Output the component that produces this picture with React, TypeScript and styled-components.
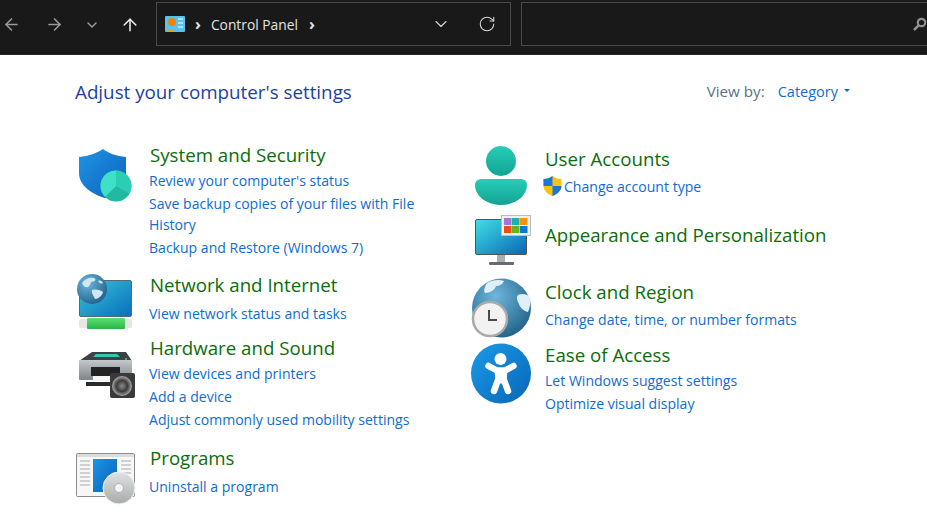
import React from 'react';
import styled, {createGlobalStyle} from 'styled-components';
import {ArrowLeft, ArrowRight, ArrowUp, ChevronDown, RotateCw} from 'lucide-react';

const GlobalStyle = createGlobalStyle`
    html, body {
        margin: 0;
        padding: 0;
        background: #fff;
        overflow: hidden;
    }
    body {
        font-family: "Open Sans", "Noto Sans", sans-serif;
    }
`;

const Page = styled.div`
    width: 927px;
    height: 523px;
    overflow: hidden;
`;

const Toolbar = styled.div`
    height: 55px;
    background: #191919;
    border-bottom: 1px solid #262626;
    box-sizing: border-box;
    display: flex;
    align-items: flex-start;
`;

const NavGroup = styled.div`
    width: 156px;
    height: 45px;
    margin-top: 2px;
    padding-left: 2px;
    box-sizing: border-box;
    display: flex;
    align-items: center;
    gap: 23px;
    flex: none;
`;

const NavIcon = styled.span<{$color: string; $after: number}>`
    display: flex;
    color: ${p => p.$color};
    margin-left: ${p => p.$after}px;
`;

const AddressBox = styled.div`
    width: 355px;
    height: 44px;
    margin-top: 2px;
    border: 1px solid #4a4a4a;
    box-sizing: border-box;
    display: flex;
    align-items: center;
    padding: 0 14px 0 8px;
    color: #e4e4e4;
    font-size: 13.8px;
    flex: none;
`;

const Crumb = styled.span`
    margin: 0 10px 0 10px;
    font-size: 16px;
    font-weight: 700;
    line-height: 1;
`;

const Arrow = styled.span`
    margin-left: 11px;
    font-weight: 700;
    font-size: 16px;
    line-height: 1;
`;

const AddressTools = styled.div`
    margin-left: auto;
    display: flex;
    align-items: center;
    gap: 27px;
    color: #d8d8d8;
`;

const SearchBox = styled.div`
    flex: 1;
    height: 44px;
    margin: 2px 0 0 10px;
    border: 1px solid #4a4a4a;
    border-right: none;
    box-sizing: border-box;
    display: flex;
    align-items: center;
    justify-content: flex-end;
`;

const Content = styled.main`
    padding: 23px 77px 0 75px;
`;

const Header = styled.div`
    display: flex;
    justify-content: space-between;
    align-items: center;
    height: 28px;
`;

const Heading = styled.h1`
    margin: 0;
    font-size: 18.8px;
    font-weight: 400;
    color: #1c3fa8;
`;

const ViewBy = styled.div`
    display: flex;
    align-items: center;
    margin-bottom: 2px;
    font-size: 15.2px;
    color: #5c7088;
`;

const ViewLink = styled.span`
    margin-left: 13px;
    font-size: 14.5px;
    color: #0f6cd4;
`;

const Caret = styled.span`
    margin-left: 6px;
    margin-bottom: 2px;
    width: 0;
    height: 0;
    border: 3px solid transparent;
    border-top: 3px solid #0f6cd4;
    border-bottom: none;
`;

const Columns = styled.div`
    display: grid;
    grid-template-columns: 396px 1fr;
`;

const Column = styled.div<{$top: number}>`
    padding-top: ${p => p.$top}px;
`;

const Category = styled.section<{$gap: number}>`
    display: grid;
    grid-template-columns: 74px 1fr;
    margin-bottom: ${p => p.$gap}px;
`;

const IconSlot = styled.svg`
    width: 75px;
    height: 70px;
    margin-bottom: -70px;
    overflow: visible;
    display: block;
`;

const CategoryTitle = styled.h2`
    margin: 0;
    font-size: 18.7px;
    line-height: 26px;
    font-weight: 400;
    color: #0b6d0b;
`;

const LeftTitle = styled(CategoryTitle)`
    margin-left: 1px;
`;

const Links = styled.div<{$top: number}>`
    margin-top: ${p => p.$top}px;
    max-width: 275px;
    display: flex;
    flex-direction: column;
    gap: 2px;
`;

const TaskLink = styled.a`
    font-size: 14.05px;
    line-height: 21px;
    color: #0f6cd4;
`;

const ShieldLink = styled(TaskLink)`
    display: flex;
    align-items: center;
    gap: 2px;
    margin-left: -2px;
    white-space: nowrap;
`;

function SecurityIcon() {
    return (
        <IconSlot viewBox="75 142 75 70">
            <defs>
                <linearGradient id="shieldBlue" x1="0" y1="0" x2="1" y2="1">
                    <stop offset="0" stopColor="#1f94e6" />
                    <stop offset="1" stopColor="#0a62b8" />
                </linearGradient>
            </defs>
            <path d="M103 149c5 4 13 7 23 8v17c0 11-9 19-21 24-14-4-26-13-26-25v-16c10-1 18-4 24-8z" fill="url(#shieldBlue)" />
            <circle cx="116" cy="186" r="15.500" fill="#22b9a3" />
            <path d="M116 186v-15.500a15.500 15.500 0 0 1 13.500 23z" fill="#2dcdb4" />
            <path d="M116 186v-15.500a15.500 15.500 0 0 0-11 26.500z" fill="#3fe0ca" />
        </IconSlot>
    );
}

function NetworkIcon() {
    return (
        <IconSlot viewBox="75 272 75 70">
            <defs>
                <linearGradient id="netScreen" x1="0" y1="0" x2="1" y2="1">
                    <stop offset="0" stopColor="#38c5d6" />
                    <stop offset="1" stopColor="#0a6ebd" />
                </linearGradient>
                <radialGradient id="netGlobe" cx="0.35" cy="0.3" r="0.8">
                    <stop offset="0" stopColor="#6fb7e0" />
                    <stop offset="1" stopColor="#1d5c85" />
                </radialGradient>
                <linearGradient id="netBar" x1="0" y1="0" x2="0" y2="1">
                    <stop offset="0" stopColor="#58e070" />
                    <stop offset="1" stopColor="#2cb44a" />
                </linearGradient>
            </defs>
            <rect x="79.500" y="280.500" width="52" height="36" rx="1.500" fill="url(#netScreen)" stroke="#5b6770" />
            <rect x="79" y="319" width="53" height="9" rx="2" fill="#e6e6e6" />
            <rect x="87" y="318" width="38" height="11" rx="1" fill="url(#netBar)" />
            <circle cx="92" cy="289" r="15" fill="url(#netGlobe)" />
            <path d="M82 283c3-4 7-6 12-5 3 1 1 4-3 4-1 3-2 6-5 5-2 0-3-2-4-4zM92 290c4-1 9 0 11 2-1 4-5 7-8 7-1-3-4-6-3-9zM98 281c2-1 4 0 5 2-1 1-3 1-5-2z" fill="#cfe6f3" />
        </IconSlot>
    );
}

function HardwareIcon() {
    return (
        <IconSlot viewBox="75 335 75 70">
            <defs>
                <linearGradient id="printBody" x1="0" y1="0" x2="0" y2="1">
                    <stop offset="0" stopColor="#c4c8cb" />
                    <stop offset="1" stopColor="#7e8488" />
                </linearGradient>
                <radialGradient id="speakerCone">
                    <stop offset="0" stopColor="#8c8c8c" />
                    <stop offset="0.55" stopColor="#3b3b3b" />
                    <stop offset="1" stopColor="#a8a8a8" />
                </radialGradient>
            </defs>
            <path d="M92 352h34l6 9H79z" fill="#3c4347" />
            <path d="M96 354h21l3 3H93z" fill="#35c8b4" />
            <rect x="79" y="360" width="53" height="20" rx="1" fill="url(#printBody)" />
            <rect x="91" y="367" width="29" height="9" fill="#222" />
            <rect x="93" y="376" width="22" height="5" fill="#f4f4f4" />
            <rect x="86" y="382" width="26" height="4" fill="#2c2c2c" />
            <circle cx="126" cy="359" r="1" fill="#4be04b" />
            <rect x="110" y="373" width="25" height="25" rx="2" fill="#3a3a3a" />
            <circle cx="122" cy="386" r="10" fill="url(#speakerCone)" />
        </IconSlot>
    );
}

function ProgramsIcon() {
    return (
        <IconSlot viewBox="75 445 75 70">
            <defs>
                <linearGradient id="progBlue" x1="0" y1="0" x2="1" y2="1">
                    <stop offset="0" stopColor="#1c95e6" />
                    <stop offset="1" stopColor="#0a5fb4" />
                </linearGradient>
                <linearGradient id="discFill" x1="0" y1="0" x2="0" y2="1">
                    <stop offset="0" stopColor="#dfe3e3" />
                    <stop offset="1" stopColor="#a9abab" />
                </linearGradient>
            </defs>
            <rect x="76.500" y="453.500" width="58" height="43" rx="1" fill="#f7f7f7" stroke="#8c8c8c" />
            <rect x="77" y="454" width="57" height="3" fill="#dcdcdc" />
            <path d="M80 461h10M80 465h10M80 469h10M80 473h10M80 477h10M80 481h10M80 485h10M121 461h10M121 465h10M121 469h10M121 473h10" stroke="#c4c4c4" strokeWidth="1.500" />
            <rect x="93" y="459" width="24" height="33" fill="url(#progBlue)" />
            <circle cx="119" cy="488" r="16" fill="url(#discFill)" stroke="#f2f2f2" />
            <circle cx="119" cy="488" r="4.500" fill="#f4f4f4" stroke="#b0b0b0" />
        </IconSlot>
    );
}

function UserIcon() {
    return (
        <IconSlot viewBox="471 146 75 70">
            <defs>
                <linearGradient id="userTeal" x1="0" y1="0" x2="0" y2="1">
                    <stop offset="0" stopColor="#28cdb6" />
                    <stop offset="1" stopColor="#12a394" />
                </linearGradient>
            </defs>
            <circle cx="501" cy="161" r="15" fill="url(#userTeal)" />
            <path d="M482 179h38c4 0 7 2 7 6 0 11-12 20-26 20s-26-9-26-20c0-4 3-6 7-6z" fill="url(#userTeal)" />
        </IconSlot>
    );
}

function AppearanceIcon() {
    return (
        <IconSlot viewBox="471 223 75 70">
            <defs>
                <linearGradient id="appScreen" x1="0" y1="0" x2="1" y2="1">
                    <stop offset="0" stopColor="#3fdfe6" />
                    <stop offset="1" stopColor="#0a66b4" />
                </linearGradient>
            </defs>
            <rect x="475.500" y="220.500" width="51" height="35" rx="1.500" fill="url(#appScreen)" stroke="#4d5559" />
            <rect x="497" y="256" width="8" height="7" fill="#a9b0b4" />
            <rect x="489" y="263" width="25" height="3" rx="1" fill="#666c70" />
            <rect x="501.500" y="216.500" width="29" height="20" fill="#f0f0f0" stroke="#bdbdbd" />
            <rect x="504" y="219" width="7.500" height="7" fill="#9a7ad6" />
            <rect x="512" y="219" width="7.500" height="7" fill="#1fb39e" />
            <rect x="520" y="219" width="7.500" height="7" fill="#f0960e" />
            <rect x="504" y="227" width="7.500" height="7" fill="#e8500f" />
            <rect x="512" y="227" width="7.500" height="7" fill="#6ab417" />
            <rect x="520" y="227" width="7.500" height="7" fill="#0a78d6" />
        </IconSlot>
    );
}

function ClockIcon() {
    return (
        <IconSlot viewBox="471 280 75 70">
            <defs>
                <radialGradient id="clockGlobe" cx="0.4" cy="0.3" r="0.8">
                    <stop offset="0" stopColor="#6db6dd" />
                    <stop offset="1" stopColor="#1c5b80" />
                </radialGradient>
            </defs>
            <circle cx="501.500" cy="309" r="29.500" fill="url(#clockGlobe)" />
            <path d="M487 284c5-3 12-4 17-2-1 3-5 5-8 5-1 4-6 7-11 7-2-2 0-7 2-10zM518 296c4-2 8-1 11 1 2 6 1 12-1 16-4-1-8-4-9-8-2-3-3-7-1-9z" fill="#dff0f8" />
            <circle cx="490" cy="320" r="17" fill="#f2f2f2" stroke="#a9a9a9" strokeWidth="2.500" />
            <path d="M489 311v10h8" fill="none" stroke="#4a4a4a" strokeWidth="2" />
        </IconSlot>
    );
}

function AccessIcon() {
    return (
        <IconSlot viewBox="471 344 75 70">
            <defs>
                <linearGradient id="accessBlue" x1="0" y1="0" x2="1" y2="1">
                    <stop offset="0" stopColor="#1a9be8" />
                    <stop offset="1" stopColor="#0866b8" />
                </linearGradient>
            </defs>
            <circle cx="501" cy="375.500" r="30" fill="url(#accessBlue)" />
            <circle cx="500.500" cy="361" r="6" fill="#fff" />
            <path d="M488.500 368l8.500 4.500h8l8.500-4.500M498 382l-4 11M504 382l4 11" fill="none" stroke="#fff" strokeWidth="6.500" strokeLinecap="round" strokeLinejoin="round" />
            <path d="M496 372h10l-1 12h-8z" fill="#fff" stroke="#fff" strokeWidth="3" strokeLinejoin="round" />
        </IconSlot>
    );
}

function UacShield() {
    return (
        <svg width="19" height="20" viewBox="0 0 19 20">
            <path d="M9.500 0c2.500 2 5.500 3 9 3v7c0 4.500-4 8-9 10-5-2-9-5.500-9-10V3c3.500 0 6.500-1 9-3z" fill="#f9c312" />
            <path d="M9.500 0v10H.5V3c3.500 0 6.500-1 9-3zM9.500 10h9c0 4.500-4 8-9 10z" fill="#1a78d6" />
        </svg>
    );
}

function ControlPanelGlyph() {
    return (
        <svg width="20" height="16" viewBox="0 0 20 16">
            <rect width="20" height="16" rx="1" fill="#5cc0ee" />
            <circle cx="7" cy="6" r="4" fill="#e8860c" />
            <path d="M13 3h5M13 7h5M13 11h5" stroke="#fff" />
            <rect x="2" y="13" width="7" height="2" fill="#e8a00c" />
        </svg>
    );
}

function SearchGlyph() {
    return (
        <svg width="14" height="14" viewBox="0 0 14 14">
            <circle cx="8.500" cy="5.500" r="3.700" fill="none" stroke="#8f8f8f" strokeWidth="2.200" />
            <path d="M5.500 8.500L1 13" stroke="#8f8f8f" strokeWidth="2.500" />
        </svg>
    );
}

function App() {
    return (
        <Page>
            <GlobalStyle />
            <Toolbar>
                <NavGroup>
                    <NavIcon $color="#9a9a9a" $after={0}><ArrowLeft size={19} strokeWidth={2} /></NavIcon>
                    <NavIcon $color="#9a9a9a" $after={1}><ArrowRight size={19} strokeWidth={2} /></NavIcon>
                    <NavIcon $color="#9a9a9a" $after={-3}><ChevronDown size={16} strokeWidth={2.2} /></NavIcon>
                    <NavIcon $color="#f5f5f5" $after={-3}><ArrowUp size={20} strokeWidth={1.8} /></NavIcon>
                </NavGroup>
                <AddressBox>
                    <ControlPanelGlyph />
                    <Crumb>›</Crumb>
                    Control Panel
                    <Arrow>›</Arrow>
                    <AddressTools>
                        <ChevronDown size={20} strokeWidth={1.3} />
                        <RotateCw size={18} strokeWidth={1.4} />
                    </AddressTools>
                </AddressBox>
                <SearchBox>
                    <SearchGlyph />
                </SearchBox>
            </Toolbar>
            <Content>
                <Header>
                    <Heading>Adjust your computer's settings</Heading>
                    <ViewBy>
                        View by:
                        <ViewLink>Category</ViewLink>
                        <Caret />
                    </ViewBy>
                </Header>
                <Columns>
                    <Column $top={36}>
                        <Category $gap={14.5}>
                            <SecurityIcon />
                            <div>
                                <LeftTitle>System and Security</LeftTitle>
                                <Links $top={1.5}>
                                    <TaskLink>Review your computer's status</TaskLink>
                                    <TaskLink>Save backup copies of your files with File History</TaskLink>
                                    <TaskLink>Backup and Restore (Windows 7)</TaskLink>
                                </Links>
                            </div>
                        </Category>
                        <Category $gap={11.5}>
                            <NetworkIcon />
                            <div>
                                <LeftTitle>Network and Internet</LeftTitle>
                                <Links $top={4.5}>
                                    <TaskLink>View network status and tasks</TaskLink>
                                </Links>
                            </div>
                        </Category>
                        <Category $gap={15.5}>
                            <HardwareIcon />
                            <div>
                                <LeftTitle>Hardware and Sound</LeftTitle>
                                <Links $top={1.5}>
                                    <TaskLink>View devices and printers</TaskLink>
                                    <TaskLink>Add a device</TaskLink>
                                    <TaskLink>Adjust commonly used mobility settings</TaskLink>
                                </Links>
                            </div>
                        </Category>
                        <Category $gap={0}>
                            <ProgramsIcon />
                            <div>
                                <LeftTitle>Programs</LeftTitle>
                                <Links $top={4.5}>
                                    <TaskLink>Uninstall a program</TaskLink>
                                </Links>
                            </div>
                        </Category>
                    </Column>
                    <Column $top={40}>
                        <Category $gap={25.5}>
                            <UserIcon />
                            <div>
                                <CategoryTitle>User Accounts</CategoryTitle>
                                <Links $top={3.5}>
                                    <ShieldLink><UacShield />Change account type</ShieldLink>
                                </Links>
                            </div>
                        </Category>
                        <Category $gap={31}>
                            <AppearanceIcon />
                            <CategoryTitle>Appearance and Personalization</CategoryTitle>
                        </Category>
                        <Category $gap={12.5}>
                            <ClockIcon />
                            <div>
                                <CategoryTitle>Clock and Region</CategoryTitle>
                                <Links $top={3.5}>
                                    <TaskLink>Change date, time, or number formats</TaskLink>
                                </Links>
                            </div>
                        </Category>
                        <Category $gap={0}>
                            <AccessIcon />
                            <div>
                                <CategoryTitle>Ease of Access</CategoryTitle>
                                <Links $top={1.5}>
                                    <TaskLink>Let Windows suggest settings</TaskLink>
                                    <TaskLink>Optimize visual display</TaskLink>
                                </Links>
                            </div>
                        </Category>
                    </Column>
                </Columns>
            </Content>
        </Page>
    );
}

export default App;
